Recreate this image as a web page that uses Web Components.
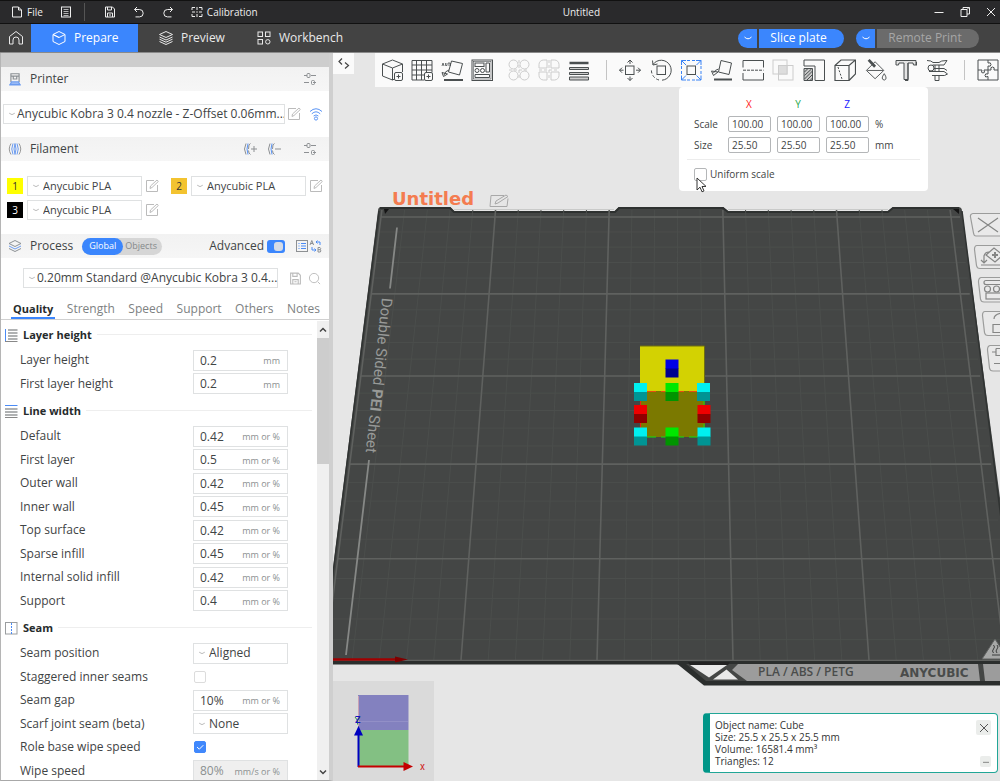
<!DOCTYPE html>
<html lang="en">
<head>
<meta charset="utf-8">
<title>Untitled</title>
<style>
html,body{margin:0;height:100%}
body{font:12px/16px "Open Sans","Noto Sans",sans-serif;color:#3f4445;background:#e6e6e6;overflow:hidden}
</style>
</head>
<body>
<slicer-app></slicer-app>
<script>
const RESET = `*,*::before,*::after{box-sizing:border-box}button,input,select{font:inherit;color:inherit;margin:0;padding:0;border:0;background:none;border-radius:0;outline:0;min-width:0}button{cursor:pointer}`;
const define = (name, css, html) => {
  const tpl = document.createElement('template');
  customElements.define(name, class extends HTMLElement {
    constructor() { super(); this.attachShadow({ mode: 'open' }); }
    connectedCallback() {
      if (this.shadowRoot.childNodes.length) return;
      tpl.innerHTML = `<style>${RESET}${css}</style>` + (typeof html === 'function' ? html(n => this.getAttribute(n) ?? '') : html);
      this.shadowRoot.append(tpl.content.cloneNode(true));
    }
  });
};

/* Each entry: [viewBox size, markup]. Strokes take the current colour. */
const PLUS_BADGE = '<rect x="13.5" y="13.5" width="8" height="8" rx="1.5" fill="#fafafa"/><path d="M17.5 15.5v4M15.5 17.5h4"/>';
const ICONS = {
  file: [12, '<path d="M1.5 1h6l3 3v7h-9zM7.5 1v3h3"/>'],
  list: [12, '<rect x="1.5" y="1" width="9" height="10"/><path d="M3.5 3.5h5M3.5 5.5h5M3.5 7.5h5M3.5 9.5h5" stroke-width=".7"/>'],
  save: [12, '<path d="M1.5 1h7l2 2v8h-9zM3.5 1v3h4v-3M3.5 11v-4h5v4M5 9h2"/>'],
  undo: [12, '<path d="M4 1 1.5 3.5 4 6M1.5 3.5h5a3.7 3.7 0 0 1 0 7.4h-4"/>'],
  redo: [12, '<path d="M8 1l2.5 2.5L8 6M10.5 3.5h-5a3.7 3.7 0 0 0 0 7.4h4"/>'],
  calib: [12, '<path d="M4 1.5H1V4M8 1.5h3V4M4 10.5H1V8M8 10.5h3V8M6 1v3M6 8v3M1 6h3M8 6h3"/><path d="M6 5.5v1" stroke-width="1.5"/>'],
  min: [12, '<path d="M1.5 6.5h9"/>'],
  restore: [12, '<path d="M2 3.5h6v7h-6zM4 3.5v-2h6.5v6.5H8M8 3.5l2-2"/>'],
  close: [12, '<path d="M2 2l8 8M10 2l-8 8"/>'],
  home: [16, '<path d="M1.5 6.5 8 1.5l6.5 5v7.5h-3.5v-4a3 3 0 0 0-6 0v4H1.5z"/>'],
  cube: [16, '<path d="M8 1.5l6 3v7l-6 3-6-3v-7zM2 4.5l6 3 6-3M2 4.5l6 3"/>'],
  layers: [16, '<path d="M8 1.5l6.5 3L8 7.5 1.5 4.5zM1.5 7l6.5 3 6.5-3M1.5 9.2l6.5 3 6.5-3M1.5 11.5l6.5 3 6.5-3"/>'],
  apps: [16, '<rect x="2" y="2" width="4.5" height="4.5"/><rect x="9.5" y="2" width="4.5" height="4.5"/><rect x="2" y="9.5" width="4.5" height="4.5"/><circle cx="11.8" cy="11.8" r="2.2"/>'],
  chev: [10, '<path d="M1.5 4q3.5 3.6 7 0"/>'],
  printer: [12, '<path d="M2.5 8.5v-7h7v7M2.5 3.5h7M4.5 3.5v2.5h3V3.5" stroke="#8b9094"/><path d="M1 11h10M3 8.5h6l1 2H2z" stroke="#6c9cf0" fill="#a9c5f7"/>'],
  sliders: [14, '<path d="M1 3.5h3M8 3.5h5M1 10.5h5M10 10.5h3"/><rect x="4" y="1.5" width="3" height="4" rx="1"/><rect x="8.5" y="8.5" width="3" height="4" rx="1"/>'],
  edit: [14, '<path d="M9 1.5H1.5v11h11V6M5 9.5l.5-2.5 6.5-6 1.3 1.5-6.3 6z"/>'],
  wifi: [14, '<path d="M1 4.5q6-5.5 12 0M2.8 6.8q4.2-4 8.4 0M4.6 9q2.4-2.2 4.8 0" stroke="#5b95f5"/><circle cx="7" cy="11.5" r="1.6" stroke="#5b95f5"/>'],
  spool: [14, '<path d="M3 1.5q-3.5 5.5 0 11M11 1.5q3.5 5.5 0 11" stroke="#999"/><path d="M5 1.5q-2.5 5.5 0 11M7 1.5q-2 5.5 0 11M7 1.5q2 5.5 0 11M9 1.5q2.5 5.5 0 11" stroke="#6c9cf0"/>'],
  spoolAdd: [14, '<path d="M3 1.5q-3 5.5 0 11M7.5 1.5q-2 0-2 5.5"/><path d="M5 1.5q-2 5.5 0 11" stroke="#5b95f5"/><path d="M7.5 12.5q-2-1-2-4M8 7h6M11 4v6"/>'],
  spoolDel: [14, '<path d="M3 1.5q-3 5.5 0 11M7.5 1.5q-2 0-2 5.5"/><path d="M5 1.5q-2 5.5 0 11" stroke="#5b95f5"/><path d="M7.5 12.5q-2-1-2-4M8 7h6"/>'],
  process: [14, '<path d="M7 1.5l6 3-6 3-6-3z" stroke="#8b9094"/><path d="M1 7l6 3 6-3" stroke="#6c9cf0"/><path d="M1 9.5l6 3 6-3" stroke="#8b9094"/>'],
  table: [14, '<rect x="1.5" y="1.5" width="11" height="11"/><path d="M3.5 4.5h1M3.5 7h1M3.5 9.5h1M6 4.5h5M6 7h5M6 9.5h5" stroke="#4b8bf5"/>'],
  compare: [14, '<path d="M1 6l1.8-4.5L4.6 6M1.6 4.5h2.4M9 8.5v4.5h2.3q1.2-1.2 0-2.2q1-1.2-.3-2.3zM9 10.7h2.3"/><path d="M7 3h4v3M8.5 1.5L7 3l1.5 1.5M3 8v3h4M5.5 9.5L7 11l-1.5 1.5" stroke="#4b8bf5"/>'],
  search: [14, '<circle cx="6.5" cy="6.5" r="5"/><path d="M10.5 10.5l2.5 2.5"/>'],
  layerH: [14, '<path d="M1.5 1v12" stroke="#4b8bf5"/><path d="M4 2h9.5M4 5h9.5M4 8h9.5M4 11h9.5" stroke="#b0b2b3" stroke-width="2"/><path d="M1 13.5h12.5" stroke="#888"/>'],
  lineW: [14, '<path d="M1 1.5h12.5" stroke="#4b8bf5"/><path d="M1 5h12.5M1 8h12.5M1 11h12.5" stroke="#b0b2b3" stroke-width="2"/><path d="M1 13.5h12.5" stroke="#888"/>'],
  seam: [14, '<rect x="1.5" y="1.5" width="11.5" height="11.5" stroke="#9a9d9f"/><path d="M7.5 2v11" stroke="#4b8bf5" stroke-dasharray="2 1"/>'],
  up: [10, '<path d="M2 6.5l3-3 3 3" stroke-width="1.5"/>'],
  down: [10, '<path d="M2 3.5l3 3 3-3" stroke-width="1.5"/>'],
  expand: [14, '<path d="M5 1.5l-3 3 3 3M8 5.5l3.5 3-3.5 3" stroke-width="1.2"/>'],
  addCube: [22, '<path d="M11.5 1l10 4v8M11.5 21 1.5 17V5l10-4M1.5 5l10 4 10-4M11.5 9v12l2-1"/>' + PLUS_BADGE],
  addPlate: [22, '<path d="M1 1.5h20v12M1 1.5v19.5h12.5M5.5 1.5v19.5M10.5 1.5v19.5M15.5 1.5v12M1 6h20M1 11h20M1 16h12.5"/>' + PLUS_BADGE],
  autoOrient: [22, '<path d="M10.5 2l11 2.5-3 11.5-11-3z"/><path d="M3 20.5h19M3 21.5h19" stroke-width="1.2"/><path d="M8 11q-4 1-5 5M1 13.5l1.5 4L6.5 15z"/><path d="M1 7l1-3 1 3M4.5 4v2.5h1.5V4M7 4h2M8 4v3M9.5 4v3" stroke-width=".8"/>'],
  arrange: [22, '<rect x="1" y="1" width="20.5" height="20.5"/><rect x="2.5" y="2.5" width="17.5" height="17.5" stroke-width=".6"/><rect x="4" y="4" width="9" height="3.5"/><circle cx="6" cy="11.5" r="2"/><circle cx="11.5" cy="11.5" r="2"/><path d="M15 4h3.5v9H15zM4 15.5h14.5v3H4z"/>'],
  splitObj: [22, '<circle cx="5.5" cy="5.5" r="4.5"/><circle cx="16.5" cy="5.5" r="4.5"/><circle cx="5.5" cy="16.5" r="4.5"/><circle cx="16.5" cy="16.5" r="4.5"/><path d="M11 1v20M1 11h20" stroke-dasharray="3 2"/>'],
  splitPart: [22, '<path d="M9 1H5.5A4.5 4.5 0 0 0 1 5.5V9h8zM13 1h3.5A4.5 4.5 0 0 1 21 5.5V9h-8zM9 21H5.5A4.5 4.5 0 0 1 1 16.5V13h8zM13 21h3.5A4.5 4.5 0 0 0 21 16.5V13h-8z"/><path d="M11 1v20M1 11h20" stroke-dasharray="3 2"/>'],
  layerEdit: [22, '<path d="M1.5 4h19" stroke-width="2.5"/><path d="M1.5 8.5h19v2h-19zM1.5 13.5h19v2h-19zM1.5 18h19v3h-19z" fill="#ccc"/>'],
  move: [22, '<rect x="6.5" y="7" width="8.5" height="8.5"/><path d="M11 5V1M8.5 3.5L11 1l2.5 2.5M11 17.5v4M8.5 19L11 21.5l2.5-2.5M4.5 11.2H.5M3 8.7L.5 11.2 3 13.7M17 11.2h4.5M19 8.7l2.5 2.5-2.5 2.5"/>'],
  rotate: [22, '<rect x="7" y="7" width="8.5" height="8.5"/><path d="M3 5.5A10 10 0 1 1 12 21.2"/><path d="M9 21A10 10 0 0 1 1.5 10" stroke-dasharray="3 2"/><path d="M2.5 1.5L3 6l4.5-1"/>'],
  scale: [22, '<rect x="7" y="7" width="8.5" height="8.5"/><path d="M7 1.5h8.5M7 21h8.5M1.5 7v8.5M21 7v8.5" stroke-dasharray="3 2" stroke="#3a83f5"/><path d="M1.5 6V1.5H6M1.5 1.5L6 6M16 1.5h5V6M21 1.5L16.5 6M1.5 16.5v4.5H6M1.5 21L6 16.5M21 16.5v4.5h-5M21 21l-4.5-4.5" stroke="#3a83f5"/>'],
  layFace: [22, '<path d="M10 1.5L20.5 4l-2.5 11.5-10.5-2.5z"/><path d="M3 20.5h18" stroke-width="2"/><path d="M7.5 10q-4 1-5 4M.5 12l2 4.5L7 13z"/>'],
  cut: [22, '<path d="M1 8.5v-7h20.5v7M1 14v7h20.5v-7"/><path d="M1 11.2h20.5" stroke-dasharray="3 1"/>'],
  boolean: [22, '<rect x="1" y="1" width="14" height="14"/><rect x="6.5" y="6.5" width="14.5" height="14.5"/><rect x="6.5" y="6.5" width="8.5" height="8.5" fill="#ddd"/>'],
  support: [22, '<path d="M1 7V1h20.5v20.5H12M1 7h11v14.5"/><path d="M1 9.5h8.5v12H1z" fill="#c9c9c9"/><path d="M1.5 13l3-3M1.5 16.5l7-6.5M1.5 20l8-8M4 21l5.5-5.5M7.5 21l2-2"/>'],
  seamPaint: [22, '<path d="M1 6.5h14v15H1zM1 6.5L7 1h14.5L15 6.5M21.5 1v14L15 21.5" stroke-width="1.2"/><path d="M4 8l4 12" stroke-dasharray="2 1.5"/>'],
  bucket: [24, '<path d="M11 3l9.5 9.5L11 21.5 1.5 12.5zM2.5 12.5h17.5"/><path d="M4 1l7 7.5" stroke-width="3"/><path d="M21 16q-4.5 6 0 7q4-1 0-7z"/>'],
  text: [22, '<path d="M1 1.5h20v4.5h-2.5l-.5-2h-5v16.5h-4V4H4l-.5 2H1z" fill="#e4e4e4"/><path d="M13 4v17.5h-3M21.5 3v3.5"/>'],
  caliper: [22, '<path d="M1 1.5q4.500 0 6 2h6q1.5-2 8-2l-3 4.5H6.500M3 12.5h15l3.500 2.500-3 1.500H6M9 6v6.500M13 6v6.500M9 16.5v5M13 16.5v5M9 21.5h4M8 9.500h10M18 9.5l3 2"/><circle cx="5" cy="9" r="3"/>'],
  puzzle: [22, '<path d="M1 1h20v20H1z"/><path d="M11 1v3q3-1 3 1.5T11 7v4H7q1.5 3-1 3T5 11H1M11 11v4q-3-1-3 1.5t3 1V21M11 11h3q-1-3 1.5-3T17 11h4"/>']
};
define('ui-icon', `:host{display:inline-block;flex:none;line-height:0}svg{display:block;fill:none;stroke:currentColor}`,
  a => { const [box, body] = ICONS[a('name')]; const s = a('size') || box;
    return `<svg width="${s}" height="${s}" viewBox="0 0 ${box} ${box}" aria-hidden="true">${body}</svg>`; });

define('title-bar', `
:host{display:flex;align-items:center;height:24px;background:#2a2a2c;color:#eee;font-size:10px;border-top:1px solid #111;border-bottom:1px solid #111}
.l,.r{display:flex;align-items:center}.l{padding-left:11px;gap:17px}.r{justify-content:flex-end;gap:14px;padding:0 3px 0 28px}
button{display:flex;align-items:center;gap:4px}
.l .d{width:1px;height:18px;background:#555;margin:0 2px 0 -5px}b{flex:1;text-align:center;font-weight:400}`,
`<div class="l"><button><ui-icon name="file"></ui-icon>File</button><button aria-label="Menu"><ui-icon name="list"></ui-icon></button><span class="d"></span>
<button aria-label="Save"><ui-icon name="save"></ui-icon></button><button aria-label="Undo"><ui-icon name="undo"></ui-icon></button><button aria-label="Redo"><ui-icon name="redo"></ui-icon></button>
<button><ui-icon name="calib"></ui-icon>Calibration</button></div><b>Untitled</b>
<div class="r"><button aria-label="Minimize"><ui-icon name="min"></ui-icon></button><button aria-label="Restore"><ui-icon name="restore"></ui-icon></button><button aria-label="Close"><ui-icon name="close"></ui-icon></button></div>`);

define('pill-button', `
:host{display:flex;gap:2px;height:19px;color:#fff}
button{background:#3b86fd;display:grid;place-items:center}
.m{width:19px;border-radius:10px 0 0 10px}.t{width:85px;border-radius:0 10px 10px 0;padding-right:6px}
:host([disabled]) .t{width:102px;background:#6b6b6b;color:#a6a6a6}`,
a => `<button class="m" aria-label="Options"><ui-icon name="chev"></ui-icon></button><button class="t"${a('disabled') ? ' disabled' : ''}><slot></slot></button>`);

define('nav-bar', `
:host{display:flex;align-items:stretch;height:29px;background:#434343;color:#e9e9e9;border-bottom:1px solid #8a8a8a}
button{display:flex;align-items:center;gap:7px}
.home{width:31px;justify-content:center}.on{background:#3b86fd;color:#fff;padding:0 20px;width:107px}.pv{padding-left:20px;width:98px}.wb{padding-left:20px}
.r{margin-left:auto;display:flex;gap:12px;align-items:center;padding-right:21px}`,
`<button class="home" aria-label="Home"><ui-icon name="home"></ui-icon></button><button class="on"><ui-icon name="cube"></ui-icon>Prepare</button><button class="pv"><ui-icon name="layers"></ui-icon>Preview</button><button class="wb"><ui-icon name="apps"></ui-icon>Workbench</button>
<div class="r"><pill-button>Slice plate</pill-button><pill-button disabled="1">Remote Print</pill-button></div>`);

define('section-bar', `
:host{display:flex;align-items:center;height:24px;background:linear-gradient(#f2f2f2,#f6f6f6);padding:0 12px 0 7px;color:#3f4445}
.t{margin-left:8px}.a{margin-left:auto;display:flex;align-items:center;gap:10px;color:#8d9093}`,
a => `<ui-icon name="${a('icon')}" size="14"></ui-icon><span class="t">${a('label')}</span><slot></slot><span class="a"><slot name="actions"></slot></span>`);

define('drop-down', `
:host{display:flex;align-items:center;position:relative;height:20px;border:1px solid #dfe1e2;background:#fff}
ui-icon{position:absolute;left:4px;color:#aaa;pointer-events:none}
select{appearance:none;width:100%;height:100%;padding:0 0 0 13px;overflow:hidden;text-overflow:clip;white-space:nowrap}`,
a => `<select aria-label="${a('label')}"><option>${a('value')}</option></select><ui-icon name="chev" size="8"></ui-icon>`);

define('filament-slot', `
:host{display:flex;align-items:center;height:20px;font-size:11px}
.n{width:16px;height:16px;line-height:16px;text-align:center;font-size:10px;background:var(--c);color:var(--t,#333)}
drop-down{width:115px;margin:0 3px 0 4px;padding-left:2px}ui-icon{color:#bbb}button{display:flex}`,
a => `<button class="n" style="display:block;--c:${a('color')};--t:${a('text') || '#333'}">${a('n')}</button><drop-down label="Filament ${a('n')}" value="Anycubic PLA"></drop-down><button aria-label="Edit"><ui-icon name="edit"></ui-icon></button>`);

define('param-group', `
:host{display:block;padding-bottom:2px}
h3{margin:0;height:27px;display:flex;align-items:center;gap:5px;font:700 11px/16px "Open Sans",sans-serif;color:#262b2c;padding-left:3px}
h3::after{content:"";flex:1;height:1px;background:#eee;margin:0 5px 0 0}
::slotted(param-row){height:24px}::slotted(param-row:nth-child(even)){height:23px}`,
a => `<h3><ui-icon name="${a('icon')}"></ui-icon>${a('label')}</h3><slot></slot>`);

define('param-row', `
:host{display:flex;align-items:center;padding-left:19px}
label{width:173px;flex:none}
.box{display:flex;align-items:center;width:95px;height:21px;border:1px solid #dfe1e2;background:#fff;padding:0 7px 0 6px}
.box.off{background:#efefef;color:#8b8f90}
.box input{flex:1;width:0;height:100%}.box span{font-size:9px;color:#8b8f90;padding-top:2px}
drop-down{width:95px;height:21px;padding-left:2px}
input[type=checkbox]{appearance:none;width:12px;height:12px;border:1px solid #dcdcdc;border-radius:2px;margin-left:1px;background:#fff}
input[type=checkbox]:checked{border-color:#4088fc;background:#4088fc url("data:image/svg+xml,%3Csvg xmlns='http://www.w3.org/2000/svg' viewBox='0 0 10 10'%3E%3Cpath d='M2 5l2.3 2.2L8.3 3.2' fill='none' stroke='white'/%3E%3C/svg%3E")}`,
a => { const k = a('kind');
  const ctl = k === 'select' ? `<drop-down label="${a('label')}" value="${a('value')}"></drop-down>`
    : k === 'check' ? `<input id="f" type="checkbox" ${a('value')}>`
    : `<span class="box ${k}"><input id="f" value="${a('value')}" ${k === 'off' ? 'disabled' : ''}><span>${a('unit')}</span></span>`;
  return `<label for="f">${a('label')}</label>${ctl}`; });

define('scroll-bar', `
:host{display:flex;flex-direction:column;width:12px;background:#f0f0f0;color:#444}
button{height:16px;display:grid;place-items:center;flex:none}i{height:126px;background:#cdcdcd}`,
`<button aria-label="Scroll up"><ui-icon name="up"></ui-icon></button><i></i><button aria-label="Scroll down" style="margin-top:auto"><ui-icon name="down"></ui-icon></button>`);

define('toggle-switch', `:host{display:flex}
input{appearance:none;width:18px;height:13px;border-radius:3px;background:#3b86fd;display:grid;align-items:center;justify-items:end;padding:2px}
input::before{content:"";width:9px;height:9px;border-radius:3px;background:#d5dbe6}`, `<input type="checkbox" checked aria-label="Advanced">`);

define('side-panel', `
:host{display:flex;flex-direction:column;background:#fff;border-left:1px solid #b5b5b5;border-right:4px solid #cfcfcf;border-bottom:1px solid #a8a8a8;min-height:0}
.top{height:14px;background:#cdcdcd;flex:none}section-bar{flex:none}
.row{display:flex;align-items:center;flex:none;color:#3f4445}
.pr{padding:12px 6px 12px 2px;height:46px}.pr drop-down{width:285px;margin-right:2px}
button{display:flex}.ic{color:#bbb}
.fil{display:grid;grid-template-columns:164px 1fr;gap:4px 0;padding:15px 0 14px 6px;flex:none}
.seg{display:flex;margin-left:9px;border-radius:9px;background:#d6d6d6;height:17px;font-size:9px;align-items:center;color:#85898a}
.seg button{height:17px;align-items:center;padding:0 5px 0 2px}.seg .on{background:#3b86fd;color:#fff;border-radius:9px;padding:0 7px}
.adv{color:#3f4445;margin-right:-7px}
.ps{padding:10px 6px 10px 22px;gap:6px}.ps drop-down{width:255px;margin-right:5px}
.tabs{height:22px;border-bottom:1px solid #d0d0d0;color:#7d8182;padding:0 7px 0 10px;justify-content:space-between;align-items:stretch}
.tabs button{align-items:center;padding:1px 2px 0}.tabs .on{font:700 11px/16px "Open Sans",sans-serif;color:#262b2c;border-bottom:2px solid #3b86fd;padding-top:3px}
.body{flex:1;min-height:0;display:flex;padding-top:1px}.list{flex:1;overflow:hidden}scroll-bar{padding-top:1px}`,
`<div class="top"></div>
<section-bar icon="printer" label="Printer"><button slot="actions" aria-label="Printer settings"><ui-icon name="sliders"></ui-icon></button></section-bar>
<div class="row pr"><drop-down label="Printer" value="Anycubic Kobra 3 0.4 nozzle - Z-Offset 0.06mm..."></drop-down><button class="ic" aria-label="Edit"><ui-icon name="edit"></ui-icon></button><button aria-label="Network" style="margin-left:8px"><ui-icon name="wifi"></ui-icon></button></div>
<section-bar icon="spool" label="Filament"><button slot="actions" aria-label="Add filament"><ui-icon name="spoolAdd"></ui-icon></button><button slot="actions" aria-label="Remove filament"><ui-icon name="spoolDel"></ui-icon></button><button slot="actions" aria-label="Filament settings" style="margin-left:12px"><ui-icon name="sliders"></ui-icon></button></section-bar>
<div class="fil"><filament-slot n="1" color="#ffff00"></filament-slot><filament-slot n="2" color="#f3c330"></filament-slot><filament-slot n="3" color="#000" text="#fff"></filament-slot></div>
<section-bar icon="process" label="Process"><div class="seg"><button class="on">Global</button><button>Objects</button></div>
<span slot="actions" class="adv">Advanced</span><toggle-switch slot="actions"></toggle-switch><button slot="actions" aria-label="Table"><ui-icon name="table"></ui-icon></button><button slot="actions" aria-label="Compare" style="margin:0 -6px 0 -10px"><ui-icon name="compare"></ui-icon></button></section-bar>
<div class="row ps"><drop-down label="Process" value="0.20mm Standard @Anycubic Kobra 3 0.4..."></drop-down><button class="ic" aria-label="Save"><ui-icon name="save" size="13"></ui-icon></button><button class="ic" aria-label="Search"><ui-icon name="search" size="13"></ui-icon></button></div>
<div class="row tabs"><button class="on">Quality</button><button>Strength</button><button>Speed</button><button>Support</button><button>Others</button><button>Notes</button></div>
<div class="body"><div class="list">
<param-group icon="layerH" label="Layer height"><param-row label="Layer height" value="0.2" unit="mm"></param-row><param-row label="First layer height" value="0.2" unit="mm"></param-row></param-group>
<param-group icon="lineW" label="Line width"><param-row label="Default" value="0.42" unit="mm or %"></param-row><param-row label="First layer" value="0.5" unit="mm or %"></param-row><param-row label="Outer wall" value="0.42" unit="mm or %"></param-row><param-row label="Inner wall" value="0.45" unit="mm or %"></param-row><param-row label="Top surface" value="0.42" unit="mm or %"></param-row><param-row label="Sparse infill" value="0.45" unit="mm or %"></param-row><param-row label="Internal solid infill" value="0.42" unit="mm or %"></param-row><param-row label="Support" value="0.4" unit="mm or %"></param-row></param-group>
<param-group icon="seam" label="Seam"><param-row kind="select" label="Seam position" value="Aligned"></param-row><param-row kind="check" label="Staggered inner seams"></param-row><param-row label="Seam gap" value="10%" unit="mm or %"></param-row><param-row kind="select" label="Scarf joint seam (beta)" value="None"></param-row><param-row kind="check" label="Role base wipe speed" value="checked"></param-row><param-row kind="off" label="Wipe speed" value="80%" unit="mm/s or %"></param-row></param-group>
</div><scroll-bar></scroll-bar></div>`);

define('tool-bar', `
:host{display:flex;align-items:center;height:34px;background:#fafafa;color:#4a4f50;padding-left:2px;overflow:hidden}
button{width:30px;height:30px;display:grid;place-items:center;flex:none}
button:disabled{color:#ccc}.g{display:flex;flex:none}.g+.g{margin-left:7px}
.e{width:337px;justify-content:space-between}.s{width:1px;height:20px;background:#c4c4c4;flex:none;margin:0 8px 0 12px}`,
() => { const b = (n, off) => `<button aria-label="${n}" ${off ? 'disabled' : ''}><ui-icon name="${n}" size="22"></ui-icon></button>`;
  return `<div class="g">${b('addCube')}${b('addPlate')}${b('autoOrient')}${b('arrange')}</div><div class="g">${b('splitObj', 1)}${b('splitPart', 1)}${b('layerEdit')}</div><span class="s"></span>
<div class="g e">${b('move')}${b('rotate')}${b('scale')}${b('layFace')}${b('cut')}${b('boolean', 1)}${b('support')}${b('seamPaint')}${b('bucket')}${b('text')}${b('caliper')}</div><span class="s"></span>${b('puzzle')}`; });

define('scale-panel', `
:host{display:block;width:249px;background:#fff;border-radius:4px;font-size:10px;line-height:14px;padding:8px 8px 0;height:104px;position:relative}
table{border-collapse:separate;border-spacing:0;margin-left:7px}
th{font-weight:400;height:18px;padding:0 7px 0 0;text-align:center}td,tbody th{height:21px;padding:0 6px 0 0}tbody th{text-align:left;width:34px}
td input{display:block;width:43px;height:16px;border:1px solid #b4b6b8;border-radius:2px;padding-left:3px}
hr{border:0;height:1px;background:#ececec;margin:4px 0 7px}
label{display:flex;align-items:center;gap:3px;margin-left:7px}
label input{appearance:none;width:13px;height:13px;border:1px solid #b4b6b8;border-radius:2px}
svg{position:absolute;left:17px;top:90px}`,
() => { const r = (n, v, u) => `<tr><th scope="row">${n}</th>${'XYZ'.split('').map(x => `<td><input aria-label="${n} ${x}" value="${v}"></td>`).join('')}<td>${u}</td></tr>`;
  return `<table><thead><tr><th></th><th style="color:#f22">X</th><th style="color:#1fa84a">Y</th><th style="color:#22f">Z</th><th></th></tr></thead><tbody>${r('Scale', '100.00', '%')}${r('Size', '25.50', 'mm')}</tbody></table>
<hr><label><input type="checkbox">Uniform scale</label>
<svg width="11" height="16" viewBox="0 0 11 16" aria-hidden="true"><path d="M1 1v12l3-2.8 2 4.6 2-.9-2-4.4 4-.1z" fill="#fff" stroke="#333"/></svg>`; });

define('object-toast', `
:host{display:flex;width:295px;min-height:59px;background:#fff;border:1px solid #21a697;border-left:7px solid #009688;border-radius:4px;font-size:10px;line-height:12px;padding:5px;color:#333}
p{margin:0;flex:1}.b{display:flex;flex-direction:column;justify-content:space-between;align-items:flex-end;padding:1px 1px 0 0}
button{width:15px;height:15px;background:#ebedeb;border-radius:2px;display:grid;place-items:center;color:#555}.b button+button{width:11px;height:11px}`,
`<p>Object name: Cube<br>Size: 25.5 x 25.5 x 25.5 mm<br>Volume: 16581.4 mm³<br>Triangles: 12</p><div class="b"><button aria-label="Close"><ui-icon name="close"></ui-icon></button><button aria-label="Minimize"><ui-icon name="min" size="8"></ui-icon></button></div>`);

define('axis-gizmo', `:host{display:block;background:#dadada;width:101px;height:100px}svg{display:block;width:100%;height:100%}`,
`<svg viewBox="333 681 101 100" font-family="Roboto,sans-serif" font-size="10" fill="none"><rect x="358" y="695" width="50.5" height="35" fill="#8381bf"/><rect x="358" y="730" width="50.5" height="36.5" fill="#83c083"/><path d="M358 721.5h50" stroke="#928fc7"/><path d="M358.5 696v30" stroke="#c9a0b5"/>
<path d="M355 717l2.5 3.5 2.5-3.5M357.5 720.5v4" stroke="#2a9a4a"/><text x="355" y="723" fill="#1414c0" font-size="9" font-weight="700">Z</text>
<path d="M358.5 767V735" stroke="#0000c0" stroke-width="2"/><path d="M358.5 726l4.5 9.5h-9z" fill="#0000c0"/><path d="M358 766.5h46" stroke="#c40000" stroke-width="2"/><path d="M413 766.5l-9.5-4.5v9z" fill="#c40000"/><text x="420" y="770" fill="#d02020">x</text></svg>`);

/* The build plate is a perspective grid: five by five cells, each cut in five. */
const Y0 = 217, HORIZON = -2078, DEPTH = 2295, FORE = 0.0324;
const rowY = t => HORIZON + DEPTH / (1 - FORE * t);
const colX = (k, y) => 381 + 114 * k + (y - Y0) / (660 - Y0) * (22 * k - 56);
const plateGrid = () => {
  let minor = '', major = '';
  for (let i = 0; i <= 25; i++) {
    const y = rowY(i / 5), k = i / 5;
    const h = `M${colX(0, y)} ${y}L${colX(5.08, y)} ${y}`, v = `M${colX(k, 210)} 210L${colX(k, 660)} 660`;
    if (i % 5) { minor += h + v; } else { major += h + v; }
  }
  return `<path d="${minor}" stroke="#4b4e4c"/><path d="${major}" stroke="#5f615f" stroke-width="1.6"/>`;
};
const handle = (x, y, a, b) => `<rect x="${x - 6.5}" y="${y}" width="13" height="9.5" fill="${a}"/><rect x="${x - 6.5}" y="${y + 9}" width="13" height="9" fill="${b}"/>`;
define('plate-scene', `:host{display:block}svg{display:block;width:100%;height:100%}`,
() => `<svg viewBox="333 53 667 728" preserveAspectRatio="xMinYMin slice" fill="none">
<rect x="333" y="53" width="1200" height="1200" fill="#e6e6e6"/>
<path d="M381 207h69l4 4h161l4-4h104l5 4h160l5-4h65q4 0 4 4L1022 664H321L378 211q0-4 3-4z" fill="#444645"/>
<path d="M380 208h70l4 4h161l4-4h104l5 4h160l5-4h66" stroke="#2e3130" stroke-width="2"/>
<path d="M454 209.5h160M728 209.5h160" stroke="#c9cac9"/>
<path d="M379 211L322 660M962 211L1019 660" stroke="#303332" stroke-width="1.5"/>
${plateGrid()}
<path d="M384 209h5l-4 5zM953 209h6v5z" fill="#151515"/>
<path d="M397 227.5L390 288.5M369 460L346 655" stroke="#868886" stroke-width="1.8"/>
<g transform="translate(387 298) rotate(96)"><text x="0" y="5" font-family="Roboto,sans-serif" font-size="15" fill="#989a98">Double Sided <tspan font-weight="700">PEI</tspan> Sheet</text></g>
<path d="M333 661h700v5H707l-31-1.5H333z" fill="#2b2e2d"/>
<path d="M676 663h340v22.5H704z" fill="#2b2e2d"/><path d="M686 664h330v17H706z" fill="#444645"/>
<path d="M688 662h42l-2 3h-38z" fill="#222"/><path d="M690 665h37l-18 12.5z" fill="#e9e9e9"/><path d="M726.5 669.500l11.500 10h-25z" fill="#e9e9e9"/>
<path d="M738 664h240l2 17H747l-15-11zM983 664h30v17h-28z" fill="#9c9c9c"/>
<g font-family='"Open Sans",sans-serif' font-weight="600" fill="#4a4c4b"><text x="758" y="676" font-size="12">PLA / ABS / PETG</text><text x="900" y="677" font-family='"DejaVu Sans",sans-serif' font-weight="700" font-size="12">ANYCUBIC</text></g>
<path d="M982 659l13-20 13 20z" fill="#a7a8a7" stroke="#5e605f"/><path d="M992 655h9M993.5 653q-2-2 0-4t0-4M997 653q-2-2 0-4t0-4" stroke="#3b3d3c"/>
<path d="M333 659.5h65" stroke="#a00000" stroke-width="2.5"/><path d="M395 656.5l13 3-13 3z" fill="#7e0000"/>
<text x="392" y="205" font-family='"DejaVu Sans",sans-serif' font-weight="700" font-size="18" fill="#f47c50">Untitled</text>
<path d="M504 195.5h-13l-1 11h17l1-8M495 204l1-3 10-6 2 1.5-10 6.5z" stroke="#a8a8a8"/>
<rect x="640" y="346" width="64" height="46" fill="#d3d202"/><path d="M640 391h64.5l.5 46h-65z" fill="#7b7900"/>
<path d="M647 391.5h50" stroke="#e84a10" stroke-width="1.2" stroke-dasharray="9 5"/><path d="M647 437h57M704 396v38" stroke="#10e010" stroke-dasharray="9 5"/><path d="M640.5 396v32" stroke="#f02010"/><path d="M640 346h64.5v45" stroke="#6f6e10"/>
${handle(672, 359.5, '#0000e6', '#000090')}${handle(640.5, 383, '#00f0f0', '#009494')}${handle(672, 383, '#00e800', '#009400')}${handle(703.5, 383, '#00f0f0', '#009494')}
${handle(640.5, 405, '#ee0000', '#900000')}${handle(704, 405, '#ee0000', '#900000')}
${handle(640.5, 427.5, '#00f0f0', '#009494')}${handle(672, 427.5, '#00e800', '#009400')}${handle(704, 427.5, '#00f0f0', '#009494')}
<g stroke="#9b9c9b" fill="#e9e9e9" stroke-width="1.2"><path d="M973 213.5h40v22.5h-37q-2 0-2.5-3l-3-16q-.5-3 2.5-3.5z"/><path d="M977 245.5h40v23h-37q-3 0-3.5-3l-2-16q0-4 2.5-4z"/><path d="M981 277.5h40v24.5h-37q-3 0-3.5-3l-2-17q0-4 2.5-4.5z"/><path d="M985 311.5h40v24h-37q-3 0-3.5-3l-2-17q0-4 2.5-4z"/><path d="M990 345.5h40v25.5h-37q-3 0-3.5-3l-2-18q0-4 2.5-4.5z"/></g>
<g stroke="#858685" stroke-width="1.2"><path d="M978 218l20 14M998 218l-20 14"/><path d="M981 265h22M984 262v-6q1-4 5-4M981 260l3 3 3-3M986 255l8-7 9 7-8 7z"/><path d="M992 255h6M995 252v6" stroke-width="2"/><rect x="984" y="280.5" width="20" height="4" rx="2"/><circle cx="987.5" cy="289" r="3"/><circle cx="996.5" cy="289" r="3"/><rect x="986" y="293" width="20" height="6"/><path d="M1002 313q-8 1-8 6M993 324.5h14v8h-14z"/><path d="M992 352h4M996 348.5h8M996 348.5v7h8M994 363.5h10"/></g>
</svg>`);

define('view-port', `
:host{display:grid;grid-template:"a" 1fr/1fr;min-width:0;min-height:0;background:#e6e6e6;overflow:hidden}
plate-scene,.ui{grid-area:a;min-width:0;min-height:0}
.ui{position:relative;z-index:1;display:flex;flex-direction:column}
.t{display:flex;align-items:flex-start}.t button{width:21px;height:21px;background:#fafafa;display:grid;place-items:center;margin-right:21px;flex:none;color:#444}
tool-bar{flex:1;min-width:0}scale-panel{align-self:flex-end;margin-right:72px}
.f{margin-top:auto;display:flex;justify-content:space-between;align-items:flex-end}object-toast{margin:0 2px 8px 0}`,
`<plate-scene></plate-scene><div class="ui"><div class="t"><button aria-label="Collapse panel"><ui-icon name="expand"></ui-icon></button><tool-bar></tool-bar></div><scale-panel></scale-panel><div class="f"><axis-gizmo></axis-gizmo><object-toast></object-toast></div></div>`);

define('slicer-app', `
:host{display:grid;grid-template:auto auto minmax(0,1fr)/333px minmax(0,1fr);height:100vh}
title-bar,nav-bar{grid-column:1/-1}`,
`<title-bar></title-bar><nav-bar></nav-bar><side-panel></side-panel><view-port></view-port>`);
</script>
</body>
</html>
